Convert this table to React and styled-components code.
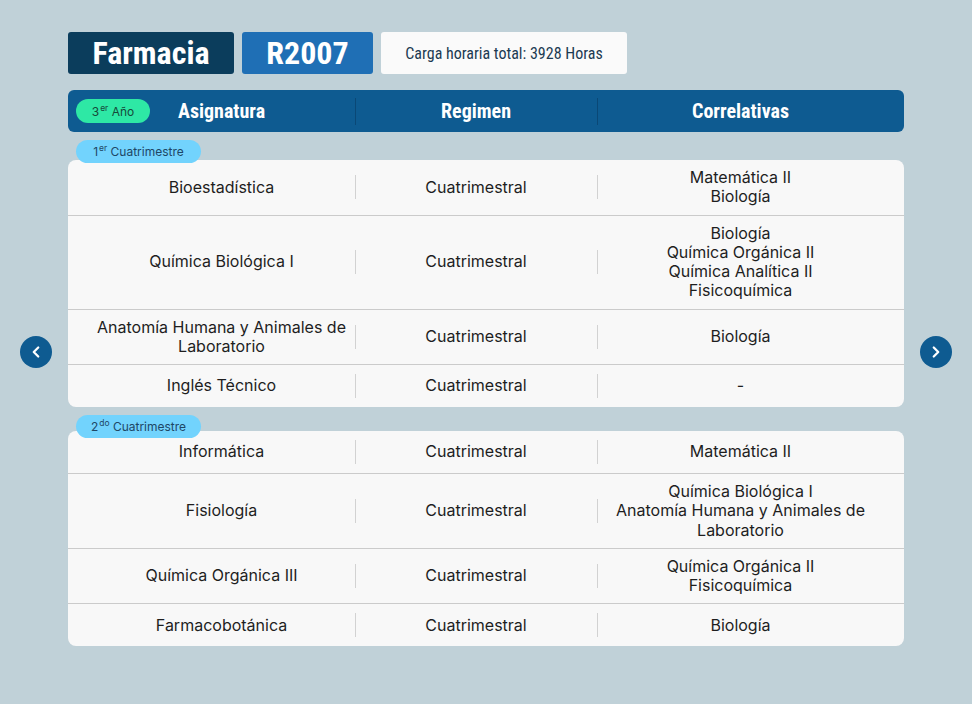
import styled, { createGlobalStyle } from "styled-components";
import { ChevronLeft, ChevronRight } from "lucide-react";

const GlobalStyle = createGlobalStyle`
  body {
    margin: 0;
    background: #c0d1d8;
    font-family: Inter, "Noto Sans", sans-serif;
  }
`;

const COLS = "267px 242px 287px";
const CONDENSED = `"Roboto Condensed", "Liberation Sans Narrow", Roboto, sans-serif`;

const Page = styled.div`
  display: flex;
  align-items: center;
  gap: 16px;
  padding: 0 20px;
  min-height: 100vh;
  box-sizing: border-box;
`;

const NavButton = styled.button`
  width: 32px;
  height: 32px;
  border-radius: 50%;
  background: #0e5b91;
  border: 0;
  padding: 0;
  color: #fff;
  display: flex;
  align-items: center;
  justify-content: center;
  flex-shrink: 0;
  cursor: pointer;
`;

const Content = styled.main`
  align-self: flex-start;
  width: 836px;
  padding-top: 32px;
`;

const TitleRow = styled.div`
  display: flex;
  gap: 8px;
  height: 42px;
`;

const Tag = styled.div`
  width: ${(p) => p.$w}px;
  background: ${(p) => (p.$dark ? "#0b3d5c" : "#1f6fb5")};
  color: #fff;
  border-radius: 3px;
  display: flex;
  align-items: center;
  justify-content: center;
  font-family: ${CONDENSED};
  font-weight: 700;
  font-size: 32px;
`;

const InfoBox = styled.div`
  width: 246px;
  background: #fafafa;
  border-radius: 3px;
  display: flex;
  align-items: center;
  justify-content: center;
  font-family: ${CONDENSED};
  font-size: 16px;
  color: #1c3a52;
`;

const HeaderBar = styled.div`
  position: relative;
  margin-top: 16px;
  height: 42px;
  background: #0e5b91;
  border-radius: 6px;
  display: grid;
  grid-template-columns: ${COLS};
  padding: 0 20px;
`;

const HeaderCell = styled.div`
  position: relative;
  display: flex;
  align-items: center;
  justify-content: center;
  color: #fff;
  font-family: ${CONDENSED};
  font-weight: 700;
  font-size: 20px;

  & + &::before {
    content: "";
    position: absolute;
    left: 0;
    top: 8px;
    bottom: 7px;
    width: 1px;
    background: #0a4876;
  }
`;

const Pill = styled.div`
  display: flex;
  align-items: center;
  justify-content: center;
  height: ${(p) => p.$h}px;
  width: ${(p) => p.$w}px;
  border-radius: 12px;
  background: ${(p) => p.$bg};
  color: ${(p) => p.$fg};
  font-size: 12px;
  white-space: nowrap;

  sup {
    font-size: 8.5px;
    line-height: 0;
    margin-left: 1px;
  }
`;

const YearBadge = styled(Pill)`
  position: absolute;
  left: 8px;
  top: 9px;
`;

const Section = styled.section`
  margin-top: 8px;
`;

const SectionPill = styled(Pill)`
  position: relative;
  z-index: 1;
  margin-left: 8px;
  margin-bottom: -${(p) => p.$overlap}px;
`;

const Card = styled.div`
  background: #f8f8f8;
  border-radius: 8px;
  overflow: hidden;
`;

const Row = styled.div`
  display: grid;
  grid-template-columns: ${COLS};
  padding: 0 20px;

  & + & {
    border-top: 1px solid #cbcbcb;
  }
`;

const Cell = styled.div`
  position: relative;
  box-sizing: border-box;
  min-height: 42px;
  padding: 8px 4px;
  display: flex;
  flex-direction: column;
  align-items: center;
  justify-content: center;
  text-align: center;
  font-size: 16px;
  line-height: 19.25px;
  color: #1e1e1e;

  & + &::before {
    content: "";
    position: absolute;
    left: 0;
    top: 50%;
    height: 24px;
    width: 1px;
    transform: translateY(-50%);
    background: #d2d2d2;
  }
`;

const sections = [
  {
    label: "1",
    sup: "er",
    overlap: 3,
    rows: [
      ["Bioestadística", "Cuatrimestral", ["Matemática II", "Biología"]],
      [
        "Química Biológica I",
        "Cuatrimestral",
        ["Biología", "Química Orgánica II", "Química Analítica II", "Fisicoquímica"],
      ],
      ["Anatomía Humana y Animales de Laboratorio", "Cuatrimestral", ["Biología"]],
      ["Inglés Técnico", "Cuatrimestral", ["-"]],
    ],
  },
  {
    label: "2",
    sup: "do",
    overlap: 7,
    rows: [
      ["Informática", "Cuatrimestral", ["Matemática II"]],
      [
        "Fisiología",
        "Cuatrimestral",
        ["Química Biológica I", "Anatomía Humana y Animales de Laboratorio"],
      ],
      ["Química Orgánica III", "Cuatrimestral", ["Química Orgánica II", "Fisicoquímica"]],
      ["Farmacobotánica", "Cuatrimestral", ["Biología"]],
    ],
  },
];

export default function App() {
  return (
    <>
      <GlobalStyle />
      <Page>
        <NavButton aria-label="Anterior">
          <ChevronLeft size={18} strokeWidth={3} />
        </NavButton>
        <Content>
          <TitleRow>
            <Tag $dark $w={166}>Farmacia</Tag>
            <Tag $w={131}>R2007</Tag>
            <InfoBox>Carga horaria total: 3928 Horas</InfoBox>
          </TitleRow>

          <HeaderBar>
            <YearBadge $w={74} $h={24} $bg="#2ee8a5" $fg="#17493a">
              <span>
                3<sup>er</sup> Año
              </span>
            </YearBadge>
            <HeaderCell>Asignatura</HeaderCell>
            <HeaderCell>Regimen</HeaderCell>
            <HeaderCell>Correlativas</HeaderCell>
          </HeaderBar>

          {sections.map((s) => (
            <Section key={s.label}>
              <SectionPill
                $w={125}
                $h={23}
                $bg="#72d3fd"
                $fg="#1e4766"
                $overlap={s.overlap}
              >
                <span>
                  {s.label}
                  <sup>{s.sup}</sup> Cuatrimestre
                </span>
              </SectionPill>
              <Card>
                {s.rows.map(([name, regime, deps]) => (
                  <Row key={name}>
                    <Cell>{name}</Cell>
                    <Cell>{regime}</Cell>
                    <Cell>
                      {deps.map((d) => (
                        <span key={d}>{d}</span>
                      ))}
                    </Cell>
                  </Row>
                ))}
              </Card>
            </Section>
          ))}
        </Content>
        <NavButton aria-label="Siguiente">
          <ChevronRight size={18} strokeWidth={3} />
        </NavButton>
      </Page>
    </>
  );
}
